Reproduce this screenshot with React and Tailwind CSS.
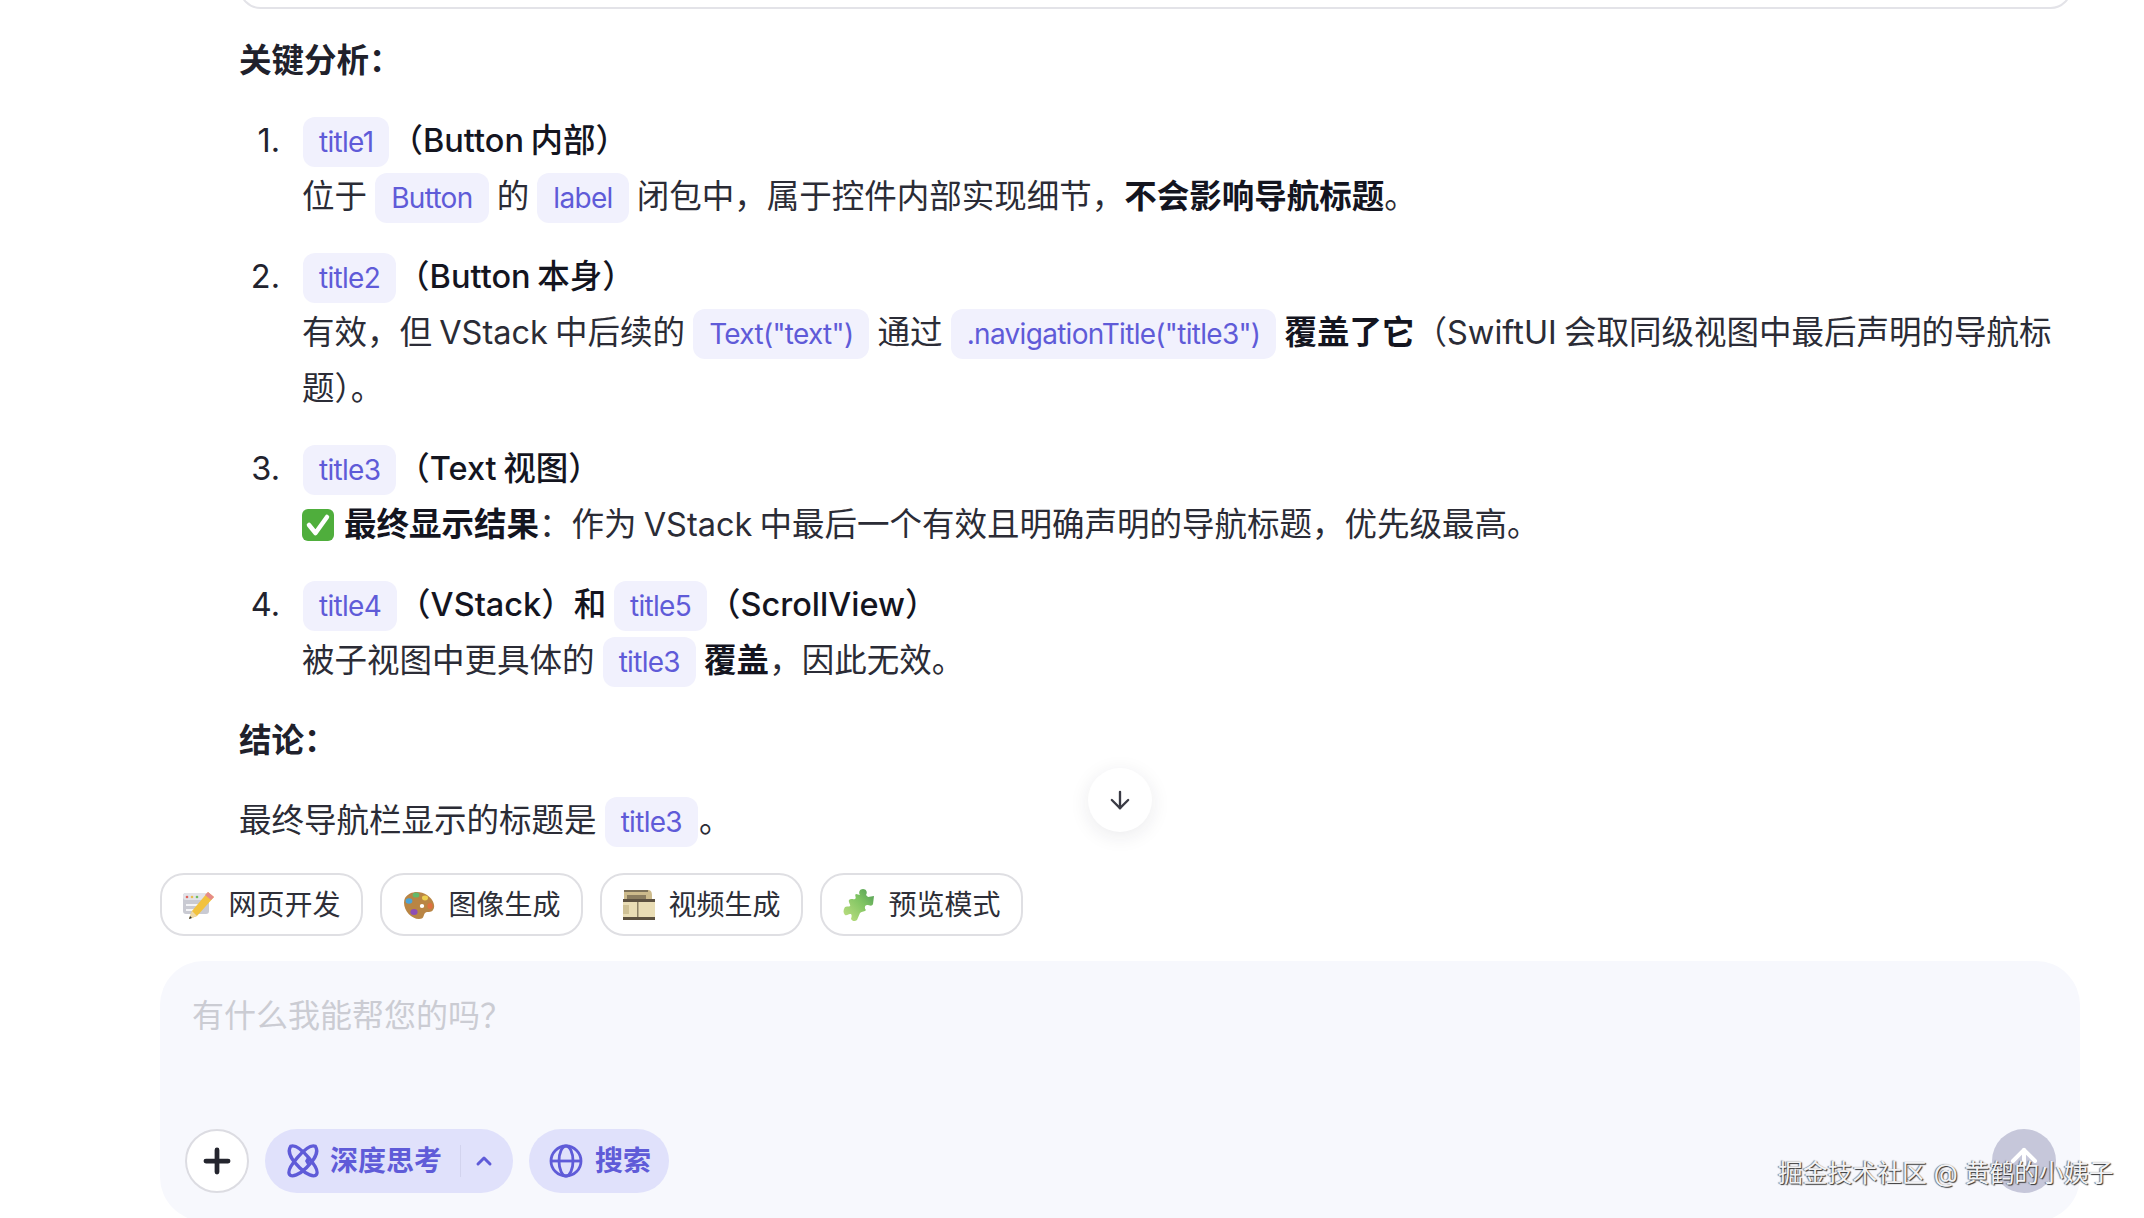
import { Plus, ChevronUp, ArrowDown, ArrowUp } from 'lucide-react';

function Code({ children }) {
  return (
    <code className="mx-[1px] rounded-[12px] bg-[#f1f1fd] px-[16px] py-[8px] font-['Inter',sans-serif] text-[28px] font-normal leading-none tracking-[-0.7px] text-[#5f5bd8]">
      {children}
    </code>
  );
}

function Item({ n, title, children }) {
  return (
    <li className="mb-[24px] flex">
      <span className="w-[63px] shrink-0 pr-[22px] text-right text-[#22232e]">{n}.</span>
      <div className="min-w-0 flex-1">
        <p className="font-medium text-[#14151f]">{title}</p>
        <p>{children}</p>
      </div>
    </li>
  );
}

function MemoIcon() {
  return (
    <svg viewBox="0 0 34 32" className="h-[32px] w-[34px]">
      <rect x="1" y="4" width="26" height="21" rx="3" fill="#c9cad2" />
      <rect x="1" y="4" width="26" height="7" rx="3" fill="#e3e3e8" />
      <circle cx="5" cy="8" r="1.3" fill="#e0625c" />
      <circle cx="10" cy="8" r="1.3" fill="#e9bd4e" />
      <circle cx="15" cy="8" r="1.3" fill="#6fbd62" />
      <rect x="4" y="15" width="12" height="2" fill="#f4f4f6" />
      <rect x="4" y="20" width="9" height="2" fill="#f4f4f6" />
      <path d="M26 3l6 5-17 19-8 3 3-8z" fill="#f2c23e" />
      <path d="M26 3l6 5-3 3-6-5z" fill="#e58a8a" />
      <path d="M10 22l5 5-8 3z" fill="#eed9a8" />
      <path d="M8 27l2 2-3 1z" fill="#333" />
    </svg>
  );
}

function PaletteIcon() {
  return (
    <svg viewBox="0 0 34 32" className="h-[32px] w-[34px]">
      <path d="M3 9c4-7 15-8 22-3 6 4 9 11 6 15-2 3-6 1-8 3-2 3-1 6-6 6C8 30-1 18 3 9z" fill="#b98544" />
      <ellipse cx="14" cy="6" rx="3.4" ry="2.6" fill="#63b96a" />
      <ellipse cx="7" cy="12" rx="3.4" ry="2.8" fill="#4ba4d8" />
      <ellipse cx="12" cy="23" rx="3.6" ry="3" fill="#8e4db5" />
      <ellipse cx="23" cy="9" rx="3" ry="2.4" fill="#efd04f" />
      <ellipse cx="28" cy="17" rx="2.6" ry="3" fill="#e0703f" />
      <ellipse cx="20" cy="17" rx="2.2" ry="2" fill="#fff" />
    </svg>
  );
}

function FilmIcon() {
  return (
    <svg viewBox="0 0 34 32" className="h-[32px] w-[34px]">
      <path d="M2 1h24c3 0 4 2 4 6v5H2z" fill="#cdbb8c" />
      <rect x="1" y="10" width="32" height="21" fill="#e9ddb5" />
      <rect x="1" y="10" width="32" height="3" fill="#5c5140" />
      <rect x="1" y="28" width="32" height="3" fill="#5c5140" />
      <rect x="2" y="1" width="24" height="2" fill="#7f735a" />
      <rect x="5" y="6" width="19" height="4" fill="#8b7d5f" />
      <rect x="15" y="13" width="1.5" height="15" fill="#8d8266" />
      <rect x="1" y="16" width="6" height="9" fill="#cfc195" />
    </svg>
  );
}

function PuzzleIcon() {
  return (
    <svg viewBox="0 0 34 34" className="h-[34px] w-[34px]">
      <defs>
        <linearGradient id="pz" x1="0" y1="1" x2="1" y2="0">
          <stop offset="0" stopColor="#c3e184" />
          <stop offset="0.6" stopColor="#7fc462" />
          <stop offset="1" stopColor="#4f9a56" />
        </linearGradient>
      </defs>
      <path d="M18 7c-2-3 0-6 3-6s5 3 3 6l2 2 6-1-1 8c-1 3-4 1-6 1s-3 3-1 5c-1 2-4 1-6 3l-3 7c-2 2-5 1-6-1 1-3 1-5-1-5s-3 2-5 1c-2-2-2-5 0-8 3-1 4 0 5-1s-2-4-1-6c2-2 4 0 6-1s-1-4 1-5z" fill="url(#pz)" />
    </svg>
  );
}

function AtomIcon() {
  return (
    <svg viewBox="0 0 32 32" fill="none" stroke="#5f5bd8" strokeWidth="3" className="h-[36px] w-[36px]">
      <path d="M5 3c4-2 10 3 16 10s9 12 7 15-9 0-15-6S1 9 5 3z" />
      <path d="M27 3c-4-2-10 3-16 10S2 25 4 28s9 0 15-6 12-13 8-19z" />
      <path d="M20 12l2.200 4-2.200 4-2.200-4z" fill="#5f5bd8" stroke="none" />
    </svg>
  );
}

function GlobeIcon() {
  return (
    <svg viewBox="0 0 34 34" fill="none" stroke="#5f5bd8" strokeWidth="2.8" className="h-[34px] w-[34px]">
      <circle cx="17" cy="17" r="15" />
      <ellipse cx="17" cy="17" rx="7" ry="15" />
      <path d="M2 17h30" />
    </svg>
  );
}

function Chip({ icon, label }) {
  return (
    <button className="flex h-[63px] w-[203px] items-center justify-center gap-[12px] rounded-[24px] border-2 border-[#dfdfe3] bg-white text-[28px] text-[#2e2f38]">
      {icon}
      <span>{label}</span>
    </button>
  );
}

export default function App() {
  return (
    <div className="relative h-[1218px] w-[2144px] overflow-hidden bg-white font-['Inter','Noto_Sans_CJK_SC',sans-serif] text-[#2b2c36]">
      <div className="pl-[239px] pr-[64px] text-[32.5px] leading-[56px] [word-spacing:-2px]">
        <div className="-mt-[34px] mb-[24px] h-[43px] mr-[8px] rounded-[26px] border-2 border-[#e3e3e8]" />
        <p className="mb-[24px] font-semibold text-[#20212b]">关键分析：</p>

        <ol>
          <Item n={1} title={<><Code>title1</Code>（Button 内部）</>}>
            位于 <Code>Button</Code> 的 <Code>label</Code> 闭包中，属于控件内部实现细节，
            <strong className="font-semibold text-[#14151f]">不会影响导航标题</strong>。
          </Item>
          <Item n={2} title={<><Code>title2</Code>（Button 本身）</>}>
            有效，但 VStack 中后续的 <Code>Text("text")</Code> 通过 <Code>.navigationTitle("title3")</Code>{' '}
            <strong className="font-semibold text-[#14151f]">覆盖了它</strong>（SwiftUI 会取同级视图中最后声明的导航标题）。
          </Item>
          <Item n={3} title={<><Code>title3</Code>（Text 视图）</>}>
            <svg viewBox="0 0 32 32" className="mr-[10px] inline-block h-[32px] w-[32px] align-[-5px]">
              <rect width="32" height="32" rx="6" fill="#4fae3c" />
              <path d="M7 16l6.500 8L25 8" fill="none" stroke="#fff" strokeWidth="4.500" strokeLinecap="round" strokeLinejoin="round" />
            </svg>
            <strong className="font-semibold text-[#14151f]">最终显示结果</strong>：作为 VStack 中最后一个有效且明确声明的导航标题，优先级最高。
          </Item>
          <Item n={4} title={<><Code>title4</Code>（VStack）和 <Code>title5</Code>（ScrollView）</>}>
            被子视图中更具体的 <Code>title3</Code>{' '}
            <strong className="font-semibold text-[#14151f]">覆盖</strong>，因此无效。
          </Item>
        </ol>

        <p className="mb-[24px] font-semibold text-[#20212b]">结论：</p>
        <p>
          最终导航栏显示的标题是 <Code>title3</Code>。
        </p>
      </div>

      <div className="mt-[24px] flex gap-[17px] pl-[160px]">
        <Chip icon={<MemoIcon />} label="网页开发" />
        <Chip icon={<PaletteIcon />} label="图像生成" />
        <Chip icon={<FilmIcon />} label="视频生成" />
        <Chip icon={<PuzzleIcon />} label="预览模式" />
      </div>

      <div className="ml-[160px] mt-[25px] flex h-[260px] w-[1920px] flex-col rounded-[44px] bg-[#f7f8fd] px-[25px] pt-[34px]">
        <p className="pl-[7px] text-[32px] leading-[42px] text-[#cbccd3]">有什么我能帮您的吗？</p>
        <div className="mt-[92px] flex items-center">
          <button className="flex h-[64px] w-[64px] items-center justify-center rounded-full border-2 border-[#dcdce2] bg-white text-[#24252e]">
            <Plus size={38} strokeWidth={3} />
          </button>
          <div className="ml-[16px] flex h-[64px] w-[248px] items-center rounded-full bg-[#e0e1fb] pl-[20px] text-[28px] font-semibold text-[#5f5bd8]">
            <AtomIcon />
            <span className="ml-[9px]">深度思考</span>
            <span className="ml-[18px] h-[32px] w-[1px] bg-[#d2d3ee]" />
            <ChevronUp size={24} strokeWidth={3} className="ml-[11px]" />
          </div>
          <div className="ml-[16px] flex h-[64px] w-[140px] items-center rounded-full bg-[#e0e1fb] pl-[20px] text-[28px] font-semibold text-[#5f5bd8]">
            <GlobeIcon />
            <span className="ml-[12px]">搜索</span>
          </div>
          <button className="ml-auto mr-[-1px] flex h-[64px] w-[64px] items-center justify-center rounded-full bg-[#c6c7da] text-white">
            <ArrowUp size={38} strokeWidth={2.5} />
          </button>
        </div>
      </div>

      <button className="absolute left-[1088px] top-[768px] flex h-[64px] w-[64px] items-center justify-center rounded-full bg-white text-[#3a3b45] shadow-[0_4px_20px_rgba(30,30,60,0.09)]">
        <ArrowDown size={28} strokeWidth={2} />
      </button>

      <span className="absolute left-[1778px] top-[1156px] text-[24.8px] leading-[34px] text-[#f2f2f4] [text-shadow:1px_1px_1px_#333,-1px_0_1px_#777]">
        掘金技术社区 @ 黄鹤的小姨子
      </span>
    </div>
  );
}
